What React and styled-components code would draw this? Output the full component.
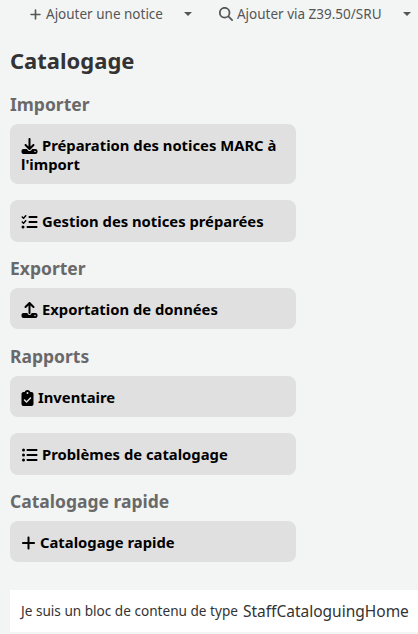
import React from 'react';
import styled, { createGlobalStyle } from 'styled-components';
import { FaDownload, FaUpload, FaListCheck, FaClipboardCheck, FaListUl, FaPlus, FaMagnifyingGlass } from 'react-icons/fa6';

const GlobalStyle = createGlobalStyle`
  html, body {
    margin: 0;
    padding: 0;
    background: #f3f5f5;
    font-family: "Noto Sans", "Open Sans", sans-serif;
    overflow: hidden;
  }
`;

const Page = styled.div`
  width: 418px;
  height: 634px;
  overflow: hidden;
`;

const Toolbar = styled.div`
  display: flex;
  height: 28px;
  align-items: center;
  padding-left: 29px;
  font-size: 13.5px;
  color: #555;
  white-space: nowrap;
`;

const ToolButton = styled.span`
  display: inline-flex;
  align-items: center;
  gap: 4px;
  svg {
    width: ${(p) => p.$icon}px;
    height: ${(p) => p.$icon}px;
    color: #555;
  }
`;

const Caret = styled.span`
  width: 0;
  height: 0;
  margin-left: ${(p) => p.$left}px;
  margin-right: ${(p) => p.$right || 0}px;
  border-left: 4px solid transparent;
  border-right: 4px solid transparent;
  border-top: 4px solid #555;
`;

const Main = styled.main`
  padding: 0 10px;
`;

const Title = styled.h1`
  margin: 19px 0 0;
  font-size: 22px;
  line-height: 26px;
  font-weight: 700;
  color: #333;
`;

const Section = styled.h3`
  margin: ${(p) => p.$top}px 0 8px;
  font-size: 17.5px;
  line-height: 24px;
  font-weight: 700;
  color: #696969;
`;

const Tile = styled.a`
  display: block;
  box-sizing: border-box;
  width: 286px;
  margin-bottom: ${(p) => p.$bottom || 0}px;
  padding: 12px 11px 10.5px;
  border-radius: 8px;
  background: #e0e0e0;
  color: #000;
  font-size: 14.8px;
  font-weight: 700;
  line-height: 19px;
  svg {
    width: ${(p) => p.$icon || 17}px;
    height: 16px;
    margin: -2px 4px -2px 0;
    vertical-align: -1px;
  }
`;

const ContentBlock = styled.div`
  box-sizing: border-box;
  height: 42px;
  margin: 27.5px -10px 0 0;
  padding: 0 11px;
  background: #fff;
  display: flex;
  align-items: center;
  color: #333;
  font-size: 13.6px;
  white-space: nowrap;
`;

const BlockType = styled.span`
  margin-left: 5px;
  font-size: 15.5px;
`;

export default function App() {
  return (
    <Page>
      <GlobalStyle />
      <Toolbar>
        <ToolButton $icon={13}><FaPlus />Ajouter une notice</ToolButton>
        <Caret $left={21} $right={27} />
        <ToolButton $icon={14}><FaMagnifyingGlass />Ajouter via Z39.50/SRU</ToolButton>
        <Caret $left={21} />
      </Toolbar>
      <Main>
        <Title>Catalogage</Title>
        <Section $top={18.5}>Importer</Section>
        <Tile $bottom={16}><FaDownload />Préparation des notices MARC à l'import</Tile>
        <Tile><FaListCheck />Gestion des notices préparées</Tile>
        <Section $top={14.25}>Exporter</Section>
        <Tile><FaUpload />Exportation de données</Tile>
        <Section $top={14.25}>Rapports</Section>
        <Tile $bottom={16} $icon={13}><FaClipboardCheck />Inventaire</Tile>
        <Tile><FaListUl />Problèmes de catalogage</Tile>
        <Section $top={14.25}>Catalogage rapide</Section>
        <Tile $icon={15}><FaPlus />Catalogage rapide</Tile>
        <ContentBlock>Je suis un bloc de contenu de type<BlockType>StaffCataloguingHome</BlockType></ContentBlock>
      </Main>
    </Page>
  );
}
